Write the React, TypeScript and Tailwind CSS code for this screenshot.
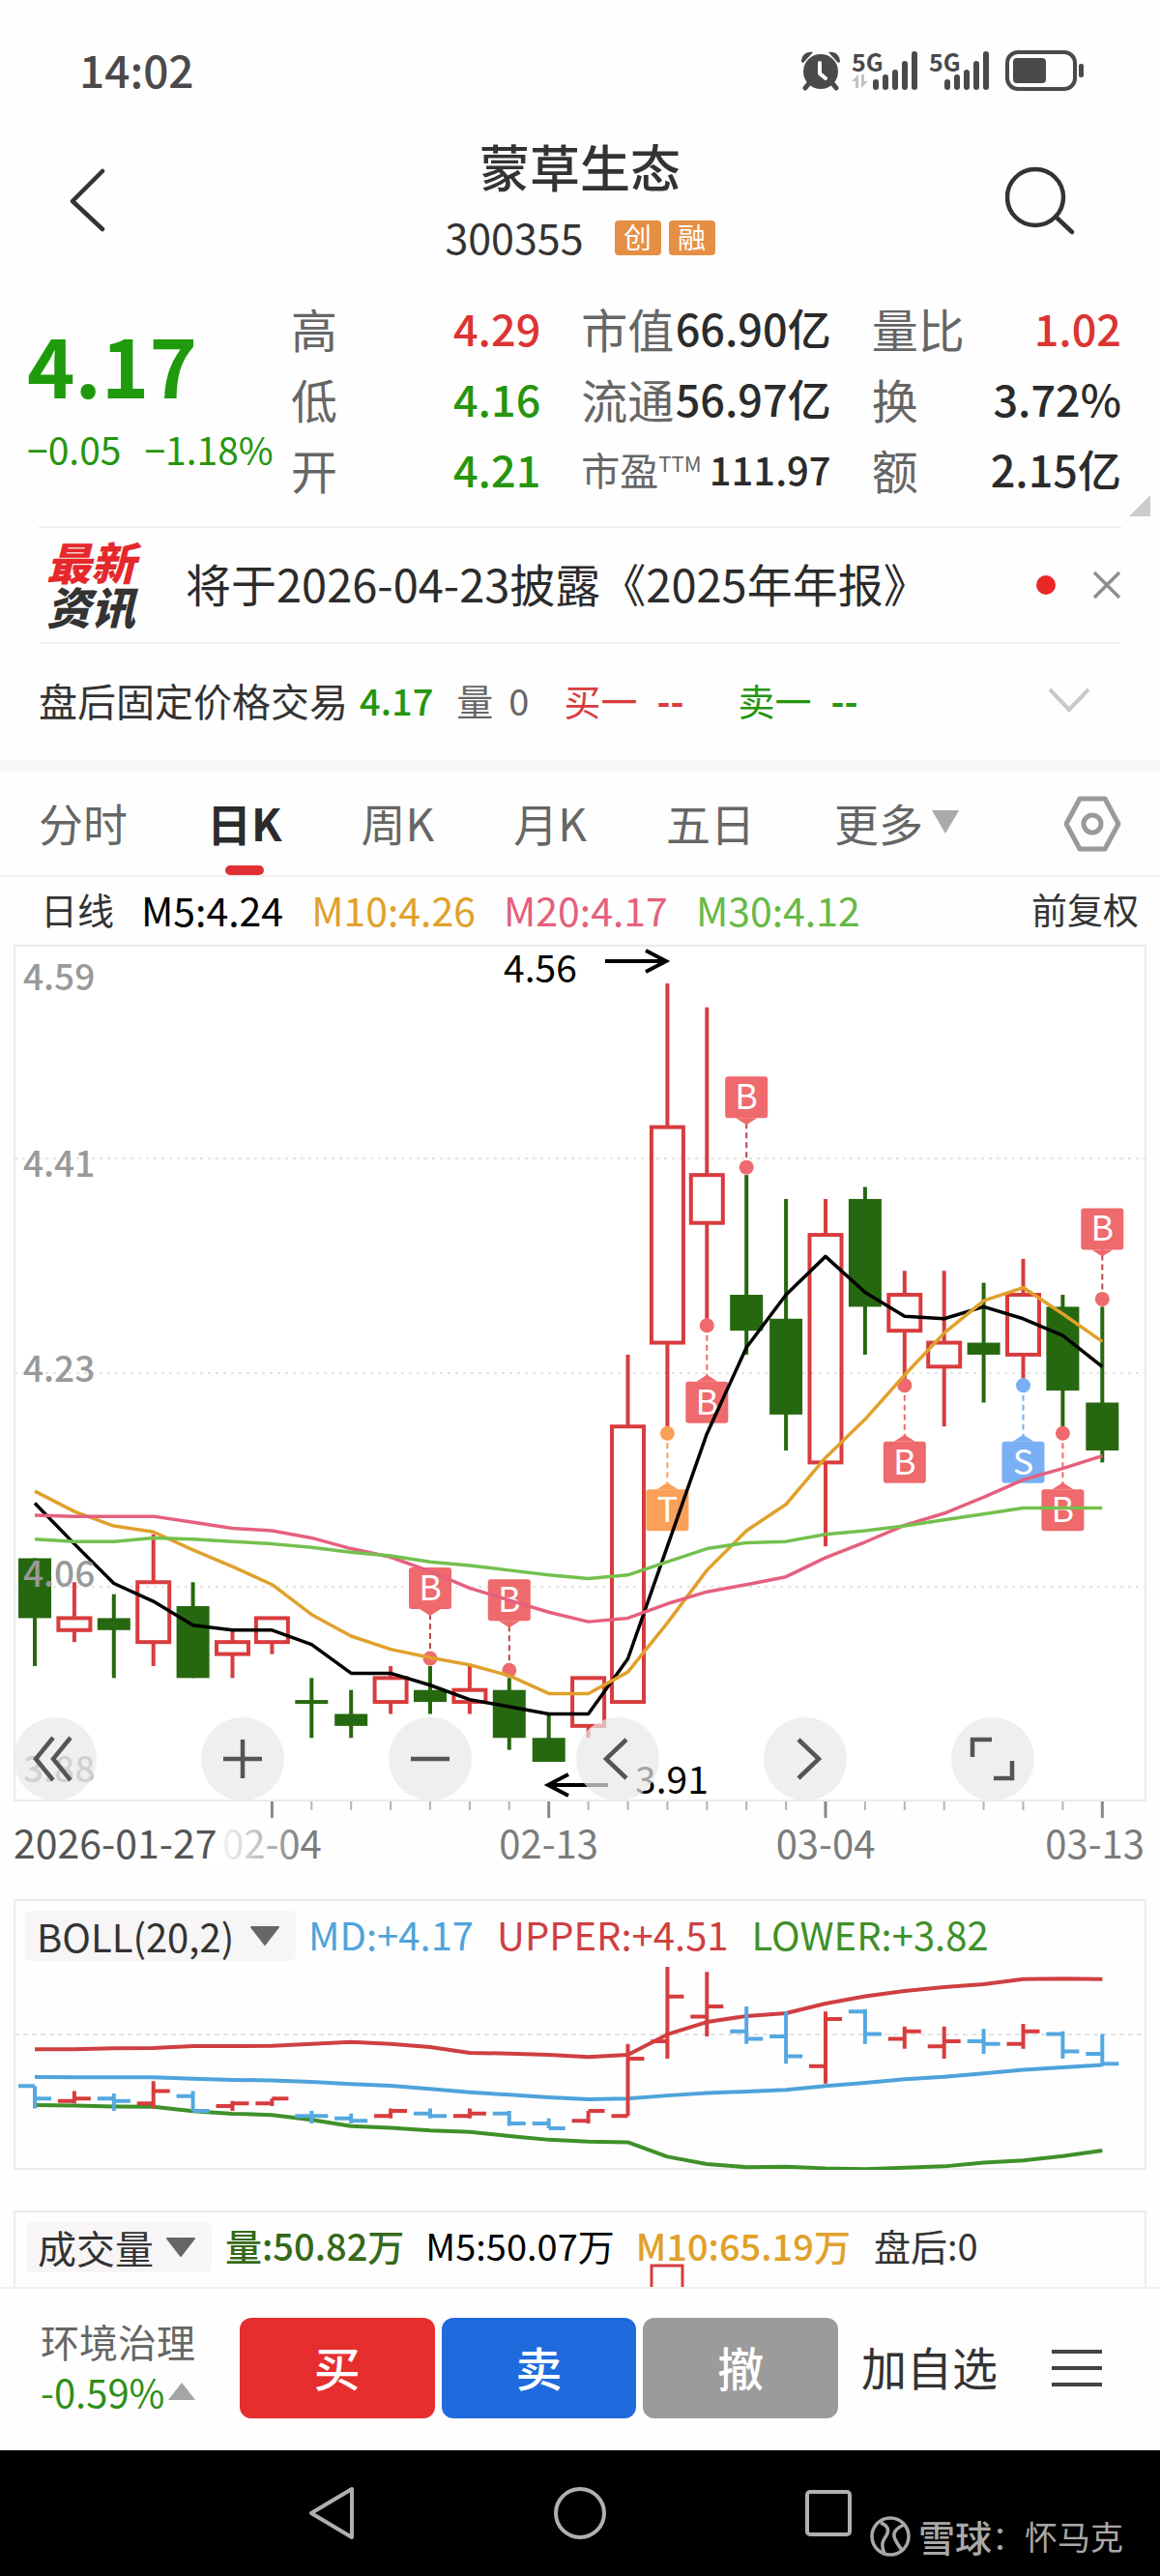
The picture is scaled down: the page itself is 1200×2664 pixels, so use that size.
import { useState } from "react";

type Candle = [open: number, close: number, high: number, low: number];

// 日K数据: 开, 收, 高, 低
const candles: Candle[] = [
  [4.08, 4.03, 4.08, 3.99],
  [4.02, 4.03, 4.06, 4.01],
  [4.03, 4.02, 4.05, 3.98],
  [4.01, 4.06, 4.1, 3.99],
  [4.04, 3.98, 4.06, 3.98],
  [4.0, 4.01, 4.02, 3.98],
  [4.01, 4.03, 4.03, 4.0],
  [3.96, 3.96, 3.98, 3.93],
  [3.95, 3.94, 3.97, 3.93],
  [3.96, 3.98, 3.99, 3.95],
  [3.97, 3.96, 3.99, 3.95],
  [3.96, 3.97, 3.99, 3.95],
  [3.97, 3.93, 3.98, 3.92],
  [3.93, 3.91, 3.95, 3.91],
  [3.94, 3.98, 3.98, 3.93],
  [3.96, 4.19, 4.25, 3.96],
  [4.26, 4.44, 4.56, 4.19],
  [4.36, 4.4, 4.54, 4.28],
  [4.3, 4.27, 4.4, 4.25],
  [4.28, 4.2, 4.38, 4.17],
  [4.16, 4.35, 4.38, 4.09],
  [4.38, 4.29, 4.39, 4.25],
  [4.27, 4.3, 4.32, 4.23],
  [4.24, 4.26, 4.32, 4.19],
  [4.26, 4.25, 4.31, 4.21],
  [4.25, 4.3, 4.33, 4.23],
  [4.29, 4.22, 4.3, 4.19],
  [4.21, 4.17, 4.29, 4.16],
];

// 前面缺少历史数据的部分直接给值，其余按收盘价计算
function movingAverage(n: number, seed: number[]) {
  return candles.map((_, i) => {
    if (i < seed.length) return seed[i];
    const part = candles.slice(i - n + 1, i + 1);
    return part.reduce((sum, c) => sum + c[1], 0) / n;
  });
}

const ma5 = movingAverage(5, [4.126, 4.092, 4.059, 4.044]);
const ma10 = movingAverage(10, [4.136, 4.119, 4.107, 4.102, 4.087, 4.073, 4.058, 4.033, 4.015]);
const ma20 = movingAverage(20, [
  4.116, 4.115, 4.115, 4.115, 4.11, 4.105, 4.103, 4.097, 4.088, 4.081, 4.069, 4.055, 4.045, 4.035, 4.027, 4.03, 4.042,
  4.052, 4.058,
]);
const ma30 = [
  4.096, 4.094, 4.094, 4.097, 4.096, 4.094, 4.092, 4.089, 4.085, 4.082, 4.077, 4.074, 4.07, 4.066, 4.063, 4.066, 4.077,
  4.088, 4.093, 4.094, 4.1, 4.103, 4.107, 4.112, 4.117, 4.122, 4.122, 4.122,
];
const upper = [
  4.228, 4.228, 4.232, 4.233, 4.241, 4.241, 4.242, 4.25, 4.257, 4.25, 4.237, 4.214, 4.211, 4.206, 4.197, 4.206, 4.288,
  4.338, 4.362, 4.373, 4.412, 4.441, 4.463, 4.478, 4.49, 4.51, 4.512, 4.51,
];
const lower = upper.map((u, i) => 2 * ma20[i] - u);

const markers = [
  { i: 10, label: "B", above: true, color: "#ef6a6d" },
  { i: 12, label: "B", above: true, color: "#ef6a6d" },
  { i: 16, label: "T", above: false, color: "#fba058" },
  { i: 17, label: "B", above: false, color: "#ef6a6d" },
  { i: 18, label: "B", above: true, color: "#ef6a6d" },
  { i: 22, label: "B", above: false, color: "#ef6a6d" },
  { i: 25, label: "S", above: false, color: "#79aff5" },
  { i: 26, label: "B", above: false, color: "#ef6a6d" },
  { i: 27, label: "B", above: true, color: "#ef6a6d" },
];

const priceLabels = [
  { text: "4.59", y: 47 },
  { text: "4.41", y: 240 },
  { text: "4.23", y: 452 },
  { text: "4.06", y: 664 },
  { text: "3.88", y: 866 },
];

const RED = "#d83c3e";
const GREEN = "#26680f";

const xOf = (i: number) => 22 + i * 40.9;
const yOf = (p: number) => 40 + (4.56 - p) * 1238.5;
const bollY = (p: number) => 70 + (4.56 - p) * 257;

const toPoints = (values: number[], y: (p: number) => number) => values.map((v, i) => `${xOf(i)},${y(v)}`).join(" ");

function Marker({ i, label, above, color }: { i: number; label: string; above: boolean; color: string }) {
  const x = xOf(i);
  const dir = above ? -1 : 1;
  const dot = above ? yOf(candles[i][2]) - 8 : yOf(candles[i][3]) + 7;
  const boxTop = above ? dot - 94 : dot + 58;
  const tip = dot + dir * 44;
  const base = above ? dot - 51 : dot + 58;
  return (
    <g>
      <line x1={x} x2={x} y1={dot} y2={dot + dir * 52} stroke={above ? "#b8474a" : color} strokeWidth="2" strokeDasharray="6 4" />
      <circle cx={x} cy={dot} r="7.5" fill={color} />
      <rect x={x - 22} y={boxTop} width="44" height="43" rx="3" fill={color} />
      <path d={`M${x - 11} ${base}L${x} ${tip + (above ? 0 : 7)}L${x + 11} ${base}Z`} fill={color} />
      <text x={x} y={boxTop + 34} textAnchor="middle" fontSize="36" fill="#fff">
        {label}
      </text>
    </g>
  );
}

function KLineChart() {
  return (
    <svg viewBox="0 0 1172 973" className="block h-auto w-full" role="img" aria-label="日K线图">
      <rect x="1" y="1" width="1170" height="884" fill="#fff" stroke="#ebebeb" strokeWidth="2" />
      {[221, 443, 664].map((y) => (
        <line key={y} x1="1" x2="1171" y1={y} y2={y} stroke="#e4e4e4" strokeWidth="2" strokeDasharray="3 5" />
      ))}

      {candles.map(([open, close, high, low], i) => {
        const x = xOf(i);
        const up = close > open;
        const top = yOf(Math.max(open, close));
        const bottom = yOf(Math.min(open, close));
        if (up) {
          return (
            <g key={i} stroke={RED} strokeWidth="4" fill="none">
              {high > close && <line x1={x} x2={x} y1={yOf(high)} y2={top} />}
              {low < open && <line x1={x} x2={x} y1={bottom} y2={yOf(low)} />}
              <rect x={x - 16.5} y={top} width="33" height={bottom - top} />
            </g>
          );
        }
        return (
          <g key={i} fill={GREEN}>
            <rect x={x - 2} y={yOf(high)} width="4" height={yOf(low) - yOf(high)} />
            <rect x={x - 17} y={top === bottom ? top - 2 : top} width="34" height={Math.max(bottom - top, 4)} />
          </g>
        );
      })}

      {markers.map((m) => (
        <Marker key={m.i} {...m} />
      ))}

      <g fill="none" strokeWidth="3.5" strokeLinejoin="round">
        <polyline points={toPoints(ma5, yOf)} stroke="#000" />
        <polyline points={toPoints(ma10, yOf)} stroke="#e0a12b" />
        <polyline points={toPoints(ma20, yOf)} stroke="#e5607d" />
        <polyline points={toPoints(ma30, yOf)} stroke="#74c04e" />
      </g>

      <g fontSize="37" fill="#999" fontWeight="500">
        {priceLabels.map((l) => (
          <text key={l.text} x="10" y={l.y}>
            {l.text}
          </text>
        ))}
      </g>

      {/* 最高 / 最低价标注 */}
      <g stroke="#000" strokeWidth="4" fill="none">
        <path d="M612 17H675M654 6L675 17L654 28" />
        <path d="M615 869H553M574 858L553 869L574 880" />
      </g>
      <g fontSize="39" fill="#000">
        <text x="507" y="39">
          4.56
        </text>
        <text x="643" y="878">
          3.91
        </text>
      </g>

      {candles.map((_, i) => {
        if (i < 6) return null;
        const major = (i - 6) % 7 === 0;
        return (
          <line
            key={i}
            x1={xOf(i)}
            x2={xOf(i)}
            y1="886"
            y2={major ? 903 : 895}
            stroke={major ? "#888" : "#b5b5b5"}
            strokeWidth={major ? 3 : 2}
          />
        );
      })}

      <defs>
        <linearGradient id="dateFade" x1="0" x2="1">
          <stop offset="0" stopColor="#fff" />
          <stop offset="0.3" stopColor="#fff" stopOpacity="0.8" />
          <stop offset="1" stopColor="#fff" stopOpacity="0" />
        </linearGradient>
      </defs>
      <g fontSize="40" fill="#7c7c7c" textAnchor="middle">
        <text x={xOf(6)} y="945">
          02-04
        </text>
        <text x={xOf(13)} y="945">
          02-13
        </text>
        <text x={xOf(20)} y="945">
          03-04
        </text>
        <text x="1170" y="945" textAnchor="end">
          03-13
        </text>
      </g>
      <rect x="200" y="908" width="100" height="48" fill="url(#dateFade)" />
      <text x="0" y="945" fontSize="41" fill="#555">
        2026-01-27
      </text>
    </svg>
  );
}

const tools = [
  { name: "最早", path: "M41 21L23 43L41 65M59 21L41 43L59 65" },
  { name: "放大", path: "M43 23V63M23 43H63" },
  { name: "缩小", path: "M23 43H63" },
  { name: "左移", path: "M52 23L31 43L52 63" },
  { name: "右移", path: "M36 23L57 43L36 63" },
  { name: "全屏", path: "M22 41V23H42M44 63H63V45" },
];

function BollChart() {
  return (
    <svg viewBox="0 0 1172 280" className="block h-auto w-full" role="img" aria-label="布林线">
      <rect x="1" y="1" width="1170" height="278" fill="none" stroke="#ebebeb" strokeWidth="2" />
      <line x1="1" x2="1171" y1="140" y2="140" stroke="#e4e4e4" strokeWidth="2" strokeDasharray="5 4" />
      <g fill="none" strokeWidth="4" strokeLinejoin="round">
        <polyline points={toPoints(upper, bollY)} stroke="#cf3f41" />
        <polyline points={toPoints(ma20, bollY)} stroke="#4fa3da" />
        <polyline points={toPoints(lower, bollY)} stroke="#3f9029" />
        {candles.map(([open, close, high, low], i) => {
          const x = xOf(i);
          return (
            <path
              key={i}
              d={`M${x} ${bollY(high)}V${bollY(low)}M${x - 17} ${bollY(open)}H${x}M${x} ${bollY(close)}H${x + 17}`}
              stroke={close > open ? "#d83c3e" : "#55a8e0"}
            />
          );
        })}
      </g>
    </svg>
  );
}

function IndicatorSelect({ id, label, options, width }: { id: string; label: string; options: string[]; width: string }) {
  return (
    <div className={`relative h-[52px] shrink-0 ${width}`}>
      <label htmlFor={id} className="sr-only">
        {label}
      </label>
      <select
        id={id}
        className="h-[52px] w-full appearance-none rounded-md bg-[#f7f5f6] py-0 pl-3 text-[40px] leading-[50px] text-[#333] outline-none"
      >
        {options.map((o) => (
          <option key={o}>{o}</option>
        ))}
      </select>
      <svg viewBox="0 0 30 20" className="pointer-events-none absolute top-4 right-[17px] h-5 w-[30px]">
        <path d="M1 1H29L15 19Z" fill="#666" stroke="#666" strokeWidth="2" strokeLinejoin="round" />
      </svg>
    </div>
  );
}

function SignalBars() {
  return (
    <svg viewBox="0 0 46 40" className="h-10 w-[46px]" stroke="#4a4a4a" strokeWidth="6" strokeLinecap="round">
      <path d="M3 32V37M13 27V37M23 22V37M33 13V37M43 3V37" />
    </svg>
  );
}

function StatusBar() {
  return (
    <div className="flex h-[146px] items-center pr-[78px] pl-[82px] text-[#4a4a4a]">
      <span className="pb-1 text-[46px] leading-none font-medium">14:02</span>
      <svg viewBox="0 0 40 42" className="ml-auto h-[42px] w-10">
        <circle cx="20" cy="22" r="18" fill="#4a4a4a" />
        <path d="M0 12C0 5 5 1 12 2L2 13ZM40 12C40 5 35 1 28 2L38 13Z" fill="#4a4a4a" />
        <path d="M8 34L4 39M32 34L36 39" stroke="#4a4a4a" strokeWidth="5" strokeLinecap="round" />
        <path d="M19 13V24L25 29" fill="none" stroke="#fff" strokeWidth="4" strokeLinecap="round" strokeLinejoin="round" />
      </svg>
      <div className="ml-3 flex h-10">
        <div className="w-[22px]">
          <div className="text-[25px] leading-5 font-bold">5G</div>
          <svg viewBox="0 0 18 14" className="mt-1 h-[14px] w-[18px]" fill="#c2c2c2">
            <path d="M0 7L7 0V14H4V7ZM17 7L10 14V0H13V7Z" />
          </svg>
        </div>
        <SignalBars />
      </div>
      <div className="ml-3 flex h-10">
        <div className="w-4 text-[25px] leading-5 font-bold">5G</div>
        <SignalBars />
      </div>
      <svg viewBox="0 0 82 42" className="ml-[17px] h-[42px] w-[82px]">
        <rect x="2" y="2" width="70" height="38" rx="11" fill="none" stroke="#4a4a4a" strokeWidth="4" />
        <rect x="8" y="8" width="34" height="26" rx="4" fill="#4a4a4a" />
        <rect x="76" y="14" width="5" height="14" rx="2" fill="#4a4a4a" />
      </svg>
    </div>
  );
}

const quotes = [
  { label: "高", value: "4.29", color: "text-[#dc3434]" },
  { label: "市值", value: "66.90亿", color: "text-[#2b2b2b]" },
  { label: "量比", value: "1.02", color: "text-[#dc3434]" },
  { label: "低", value: "4.16", color: "text-[#26950f]" },
  { label: "流通", value: "56.97亿", color: "text-[#2b2b2b]" },
  { label: "换", value: "3.72%", color: "text-[#2b2b2b]" },
  { label: "开", value: "4.21", color: "text-[#26950f]" },
  { label: "市盈", sup: "TTM", value: "111.97", color: "text-[#2b2b2b]" },
  { label: "额", value: "2.15亿", color: "text-[#2b2b2b]" },
];

const tabs = ["分时", "日K", "周K", "月K", "五日"];

export default function App() {
  const [tab, setTab] = useState("日K");

  return (
    <div className="w-full bg-[#fefefe] font-['Noto_Sans_CJK_SC',sans-serif] text-[#333]">
      <StatusBar />

      <header className="flex h-[122px] items-center justify-between pr-[88px] pl-[70px]">
        <button aria-label="返回" className="w-[90px]">
          <svg viewBox="0 0 40 66" className="h-[66px] w-10">
            <path d="M36 3L5 34L36 63" fill="none" stroke="#333" strokeWidth="4.5" strokeLinecap="round" strokeLinejoin="round" />
          </svg>
        </button>
        <div className="flex flex-col items-center">
          <h1 className="h-[56px] text-[52px] leading-[52px] font-medium">蒙草生态</h1>
          <div className="mt-[22px] flex h-11 items-center">
            <span className="pb-1 text-[43px] leading-none">300355</span>
            <span className="ml-8 h-9 w-12 rounded-sm bg-[#e58f45] text-center text-[29px] leading-[32px] text-white">创</span>
            <span className="ml-2 h-9 w-12 rounded-sm bg-[#e58f45] text-center text-[29px] leading-[32px] text-white">融</span>
          </div>
        </div>
        <button aria-label="搜索">
          <svg viewBox="0 0 72 72" className="h-[72px] w-[72px]">
            <circle cx="31" cy="33" r="29" fill="none" stroke="#333" strokeWidth="4.5" />
            <path d="M52 53L69 69" stroke="#333" strokeWidth="4.5" strokeLinecap="round" />
          </svg>
        </button>
      </header>

      <section className="relative mt-[34px] flex pr-10 pb-[23px] pl-7">
        <div className="w-[273px] shrink-0 whitespace-nowrap text-[#26950f]">
          <div className="mt-7 text-[84px] leading-[92px] font-bold text-[#1f9a0c]">4.17</div>
          <div className="mt-[18px] flex gap-6 text-[39px] leading-[48px]">
            <span>−0.05</span>
            <span>−1.18%</span>
          </div>
        </div>
        <dl className="grid flex-1 grid-cols-3 gap-x-[42px] whitespace-nowrap">
          {quotes.map((q) => (
            <div key={q.label} className="flex h-[73px] items-center justify-between leading-none">
              <dt className={q.sup ? "flex text-[40px] text-[#666]" : "text-[48px] text-[#666]"}>
                {q.label}
                {q.sup && <sup className="top-0 pt-[2px] text-[22px] leading-none">{q.sup}</sup>}
              </dt>
              <dd className={`${q.sup ? "text-[40px]" : "text-[45px]"} font-medium ${q.color}`}>{q.value}</dd>
            </div>
          ))}
        </dl>
        <svg viewBox="0 0 22 22" className="absolute right-[10px] bottom-[10px] h-[22px] w-[22px]">
          <path d="M22 0V22H0Z" fill="#ccc" />
        </svg>
      </section>

      <section className="mx-10 flex h-[122px] items-center border-y-2 border-[#f0f0f0]">
        <div className="w-[152px] shrink-0 pb-1 pl-2 text-[46px] leading-[46px] font-black italic">
          <div className="text-[#e5282c]">最新</div>
          <div>资讯</div>
        </div>
        <a href="#notice" className="pb-[6px] text-[47px] leading-none whitespace-nowrap text-[#2b2b2b]">
          将于2026-04-23披露《2025年年报》
        </a>
        <span className="ml-auto h-5 w-5 rounded-full bg-[#ea2727]" />
        <button aria-label="关闭" className="ml-[38px]">
          <svg viewBox="0 0 30 30" className="h-[30px] w-[30px]">
            <path d="M2 2L28 28M28 2L2 28" stroke="#8e8e8e" strokeWidth="3.5" />
          </svg>
        </button>
      </section>

      <section className="flex h-[120px] items-center pr-[72px] pb-1 pl-[40px] text-[38px] leading-none whitespace-nowrap">
        <span className="text-[40px]">盘后固定价格交易</span>
        <span className="ml-3 font-medium text-[#26950f]">4.17</span>
        <span className="ml-6 text-[#666]">量</span>
        <span className="ml-4 text-[#666]">0</span>
        <span className="ml-9 text-[#d83c3e]">买一</span>
        <span className="ml-5 w-11 font-bold text-[#d83c3e]">--</span>
        <span className="ml-10 text-[#26950f]">卖一</span>
        <span className="ml-5 font-bold text-[#26950f]">--</span>
        <button aria-label="展开" className="ml-auto">
          <svg viewBox="0 0 44 26" className="h-[26px] w-11">
            <path d="M2 2L22 23L42 2" fill="none" stroke="#c8c8c8" strokeWidth="4" />
          </svg>
        </button>
      </section>

      <div className="h-3 bg-[#f7f7f7]" />

      <nav className="flex h-[109px] items-center gap-[82px] border-b-2 border-[#f0f0f0] pr-10 pl-10 text-[46px] leading-none whitespace-nowrap text-[#666]">
        {tabs.map((t) => (
          <button
            key={t}
            onClick={() => setTab(t)}
            className={`relative flex h-full items-center pb-1 ${tab === t ? "font-bold text-[#2b2b2b]" : ""}`}
          >
            {t}
            {tab === t && <span className="absolute bottom-0 left-1/2 h-[10px] w-10 -translate-x-1/2 rounded-full bg-[#e13033]" />}
          </button>
        ))}
        <button className="flex items-center gap-[9px] pb-1">
          更多
          <svg viewBox="0 0 28 24" className="h-6 w-7">
            <path d="M0 0H28L14 24Z" fill="#aaa" />
          </svg>
        </button>
        <button aria-label="设置" className="ml-auto">
          <svg viewBox="0 0 60 58" className="h-[58px] w-[60px]" fill="none" stroke="#9a9a9a" strokeWidth="5" strokeLinejoin="round">
            <path d="M17 3H43L57 29L43 55H17L3 29Z" />
            <circle cx="30" cy="29" r="9" />
          </svg>
        </button>
      </nav>

      <div className="flex h-[70px] items-center pr-[22px] pb-1 pl-[42px] text-[41px] leading-none whitespace-nowrap">
        <span className="text-[38px]">日线</span>
        <span className="ml-7 text-black">M5:4.24</span>
        <span className="ml-[29px] text-[#e0a12b]">M10:4.26</span>
        <span className="ml-[29px] text-[#e5607d]">M20:4.17</span>
        <span className="ml-[29px] text-[#66b946]">M30:4.12</span>
        <button className="ml-auto text-[37px] leading-none">前复权</button>
      </div>

      <div className="relative mx-[14px]">
        <KLineChart />
        <div className="absolute right-[116px] bottom-[88px] left-0 flex justify-between">
          {tools.map((t) => (
            <button key={t.name} aria-label={t.name} className="h-[86px] w-[86px] rounded-full bg-[#e8e8e8]/70">
              <svg viewBox="0 0 86 86" className="h-full w-full">
                <path d={t.path} fill="none" stroke="#555" strokeWidth="4.5" />
              </svg>
            </button>
          ))}
        </div>
      </div>

      <div className="relative mx-[14px] mt-[14px]">
        <BollChart />
        <div className="absolute top-3 left-3 flex items-center text-[40px] leading-none whitespace-nowrap">
          <IndicatorSelect id="indicator-main" label="主指标" options={["BOLL(20,2)", "MACD", "KDJ"]} width="w-[280px]" />
          <span className="ml-[13px] pb-1 text-[#4fa3da]">MD:+4.17</span>
          <span className="ml-6 pb-1 text-[#cf3f41]">UPPER:+4.51</span>
          <span className="ml-6 pb-1 text-[#3f9029]">LOWER:+3.82</span>
        </div>
      </div>

      <div className="relative mx-[14px] mt-[42px] h-[79px] overflow-hidden border-2 border-b-0 border-[#ebebeb]">
        <svg viewBox="0 0 36 24" className="absolute bottom-0 left-[656px] h-6 w-9">
          <path d="M2 26V2H34V26" fill="none" stroke="#d83c3e" strokeWidth="3" />
        </svg>
        <div className="relative flex items-center pt-[10px] pl-[11px] text-[38px] leading-none whitespace-nowrap">
          <IndicatorSelect id="indicator-volume" label="副指标" options={["成交量", "成交额"]} width="w-[192px]" />
          <span className="ml-[14px] pb-1 font-medium text-[#35691a]">量:50.82万</span>
          <span className="ml-[22px] pb-1 text-black">M5:50.07万</span>
          <span className="ml-[22px] pb-1 font-medium text-[#e0a12b]">M10:65.19万</span>
          <span className="ml-6 pb-1">盘后:0</span>
        </div>
      </div>

      <footer className="flex h-[169px] items-center border-t-2 border-[#f0f0f0] pr-[60px] pl-10 pb-1 whitespace-nowrap">
        <div className="w-[208px] shrink-0 pb-1 pl-[2px] text-[40px] leading-[52px]">
          <div className="text-[#666]">环境治理</div>
          <div className="flex items-center text-[#2f8f1a]">
            -0.59%
            <svg viewBox="0 0 28 18" className="ml-1 h-[18px] w-7">
              <path d="M14 0L28 18H0Z" fill="#a5a5a5" />
            </svg>
          </div>
        </div>
        <div className="flex flex-1 gap-[7px] text-[48px] leading-none font-medium text-white">
          <button className="h-[104px] flex-1 rounded-xl bg-[#e62e2e] pb-1">买</button>
          <button className="h-[104px] flex-1 rounded-xl bg-[#1f6bde] pb-1">卖</button>
          <button className="h-[104px] flex-1 rounded-xl bg-[#9b9b9b] pb-1">撤</button>
        </div>
        <button className="ml-6 pb-1 text-[47px] leading-none">加自选</button>
        <button aria-label="菜单" className="ml-[56px]">
          <svg viewBox="0 0 52 40" className="h-10 w-[52px]">
            <path d="M0 3H52M0 20H52M0 37H52" stroke="#444" strokeWidth="4" />
          </svg>
        </button>
      </footer>

      <div className="relative flex h-[130px] items-center justify-center gap-[205px] bg-black">
        <button aria-label="返回键">
          <svg viewBox="0 0 50 56" className="h-14 w-[50px]">
            <path d="M46 3V53L4 28Z" fill="none" stroke="#b0b0b0" strokeWidth="4" strokeLinejoin="round" />
          </svg>
        </button>
        <button aria-label="主页键">
          <svg viewBox="0 0 54 54" className="h-[54px] w-[54px]">
            <circle cx="27" cy="27" r="25" fill="none" stroke="#b0b0b0" strokeWidth="4" />
          </svg>
        </button>
        <button aria-label="多任务键">
          <svg viewBox="0 0 50 50" className="h-[50px] w-[50px]">
            <rect x="3" y="3" width="44" height="44" rx="3" fill="none" stroke="#b0b0b0" strokeWidth="4" />
          </svg>
        </button>
        <div className="absolute right-[38px] bottom-5 flex items-center text-[#a8a8a8]">
          <svg viewBox="0 0 42 42" className="h-[42px] w-[42px]" fill="none" stroke="#a8a8a8" strokeWidth="3.5">
            <circle cx="21" cy="21" r="19" />
            <path d="M11 7C19 10 20 15 17 20C13 26 11 29 15 39M35 9C26 13 23 18 26 24C28 29 30 31 33 35" />
          </svg>
          <span className="ml-2 text-[38px] leading-[42px] font-medium">雪球</span>
          <span className="text-[34px] leading-[42px]">：怀马克</span>
        </div>
      </div>
    </div>
  );
}
